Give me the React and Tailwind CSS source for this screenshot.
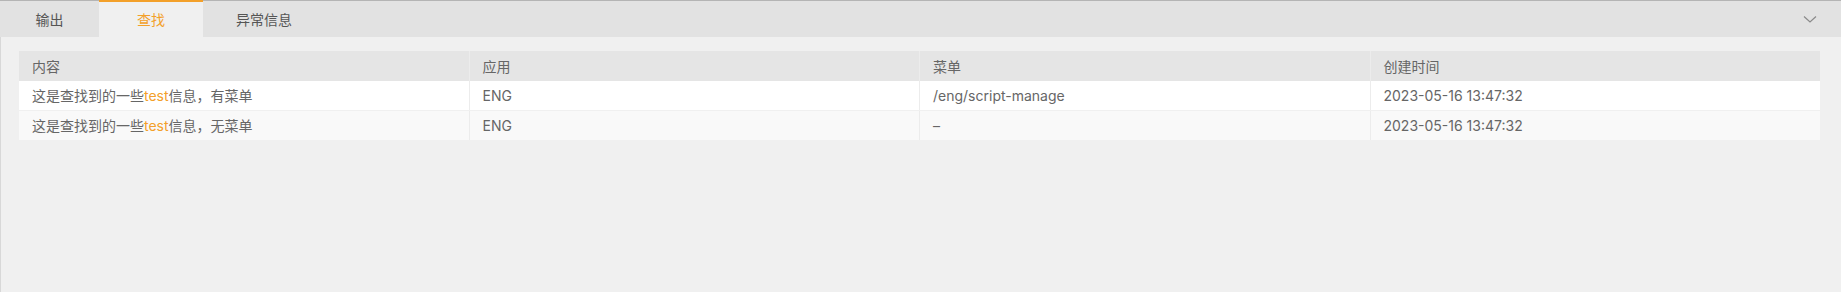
const rows = [
  { app: "ENG", menu: "/eng/script-manage", time: "2023-05-16 13:47:32", tail: "信息，有菜单" },
  { app: "ENG", menu: "–", time: "2023-05-16 13:47:32", tail: "信息，无菜单" },
];

function Cell({ children, last }) {
  return (
    <div className={"flex-1 min-w-0 h-full flex items-center pl-[13px] " + (last ? "" : "border-r border-[#ececec]")}>
      <span className="whitespace-nowrap">{children}</span>
    </div>
  );
}

export default function App() {
  return (
    <div
      className="w-[1841px] h-[292px] bg-[#f0f0f0] flex flex-col text-[14px] text-[#666]"
      style={{ fontFamily: 'Inter, "Noto Sans CJK SC", sans-serif' }}
    >
      <div className="h-[37px] bg-[#e2e2e2] border-t border-[#b4b4b4] flex items-stretch shrink-0">
        <div className="w-[99px] flex items-center justify-center text-[#555]">输出</div>
        <div className="w-[104px] -mt-px border-t-2 border-[#f3a02a] bg-[#f0f0f0] flex items-center justify-center text-[#f3a02a]">
          查找
        </div>
        <div className="px-[33px] flex items-center text-[#555]">异常信息</div>
        <div className="flex-1" />
        <div className="w-[40px] flex items-center justify-start pl-[1px]">
          <svg width="16" height="10" viewBox="0 0 16 10" fill="none" stroke="#8a8a8a" strokeWidth="1.2">
            <path d="M2 2.5 L8 8 L14 2.5" />
          </svg>
        </div>
      </div>
      <div className="flex-1 border-l border-[#d8d8d8] pt-[14px] pl-[18px] pr-[21px]">
        <div className="flex flex-col">
          <div className="h-[30px] bg-[#e5e5e5] flex">
            <Cell>内容</Cell>
            <Cell>应用</Cell>
            <Cell>菜单</Cell>
            <Cell last>创建时间</Cell>
          </div>
          {rows.map((r, i) => (
            <div
              key={i}
              className={"flex " + (i === 0 ? "h-[30px] bg-white border-b border-[#f0f0f0]" : "h-[29px] bg-[#f9f9f9]")}
            >
              <Cell>
                这是查找到的一些<span className="text-[#f3a02a]">test</span>
                {r.tail}
              </Cell>
              <Cell>{r.app}</Cell>
              <Cell>{r.menu}</Cell>
              <Cell last>{r.time}</Cell>
            </div>
          ))}
        </div>
      </div>
    </div>
  );
}
